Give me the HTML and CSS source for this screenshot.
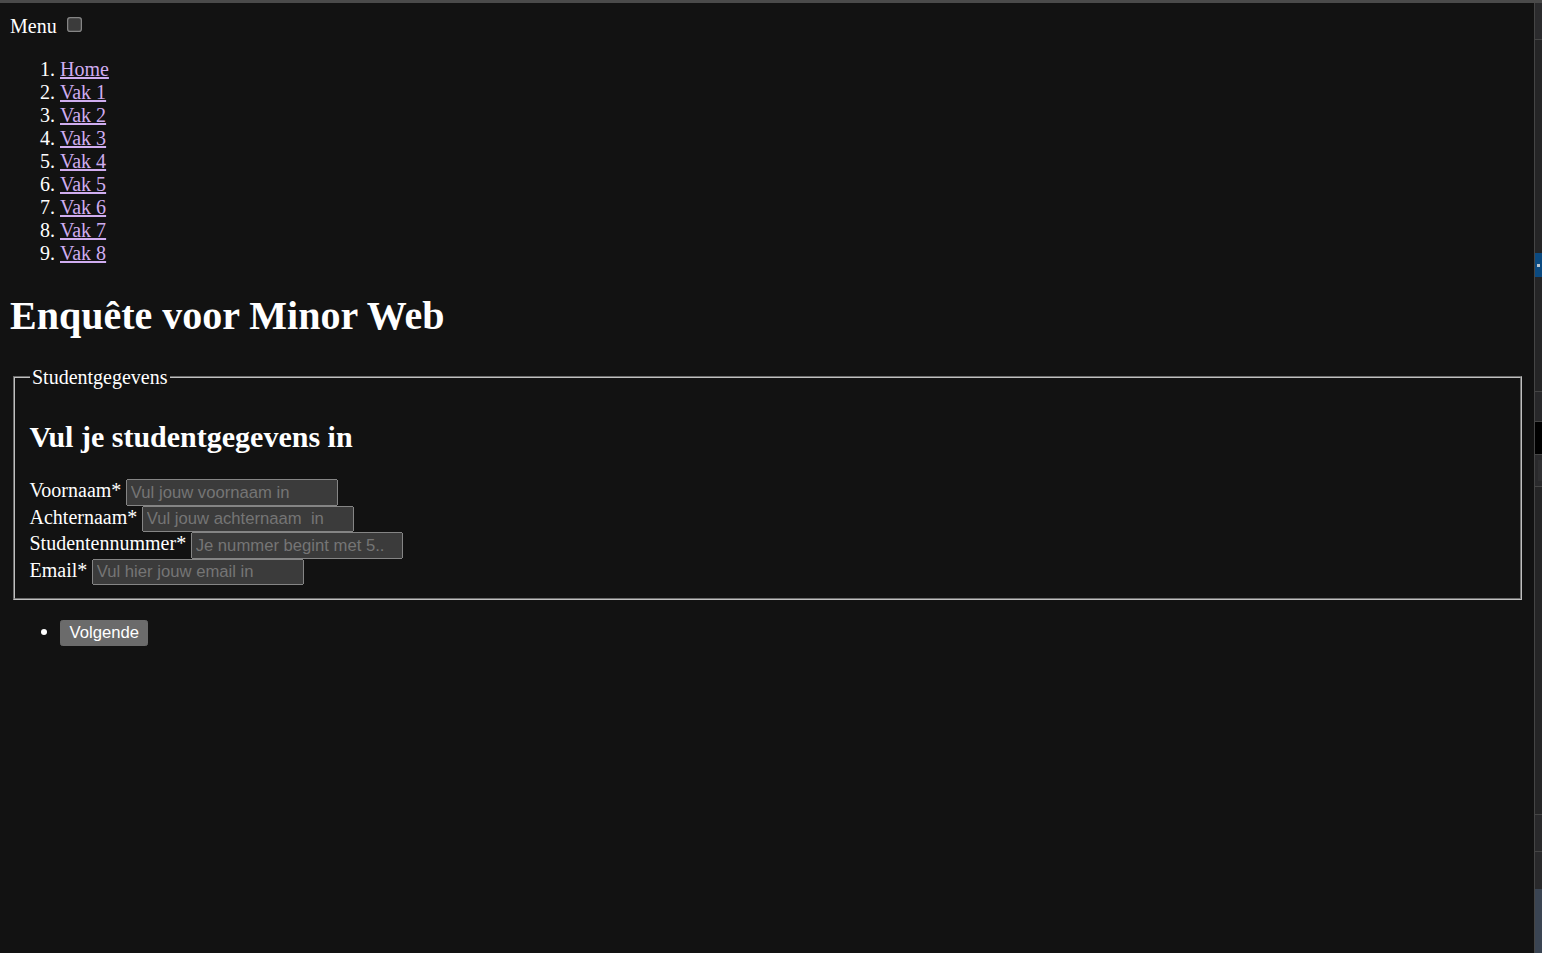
FILE: index.html
```html
<!DOCTYPE html>
<html lang="nl">
<head>
<meta charset="utf-8">
<title>Enquête voor Minor Web</title>
<link rel="stylesheet" href="styles.css">
</head>
<body class="frame">
<div class="topline"></div>
<div class="window">
  <main class="viewport">
    <div class="page">
      <nav class="menu">
        <label class="menu-label" for="menu-toggle">Menu</label>
        <input id="menu-toggle" type="checkbox">
        <ol class="menu-list">
          <li><a href="#">Home</a></li>
          <li><a href="#">Vak 1</a></li>
          <li><a href="#">Vak 2</a></li>
          <li><a href="#">Vak 3</a></li>
          <li><a href="#">Vak 4</a></li>
          <li><a href="#">Vak 5</a></li>
          <li><a href="#">Vak 6</a></li>
          <li><a href="#">Vak 7</a></li>
          <li><a href="#">Vak 8</a></li>
        </ol>
      </nav>
      <h1 class="title">Enquête voor Minor Web</h1>
      <form class="survey">
        <fieldset class="group">
          <legend>Studentgegevens</legend>
          <h2 class="group-title">Vul je studentgegevens in</h2>
          <label for="voornaam">Voornaam*</label>
          <input class="field" id="voornaam" type="text" placeholder="Vul jouw voornaam in"><br>
          <label for="achternaam">Achternaam*</label>
          <input class="field" id="achternaam" type="text" placeholder="Vul jouw achternaam  in"><br>
          <label for="nummer">Studentennummer*</label>
          <input class="field" id="nummer" type="text" placeholder="Je nummer begint met 5.."><br>
          <label for="email">Email*</label>
          <input class="field" id="email" type="email" placeholder="Vul hier jouw email in">
        </fieldset>
        <ul class="actions">
          <li><button type="button">Volgende</button></li>
        </ul>
      </form>
    </div>
  </main>
  <aside class="sidebar">
    <div class="seg seg-top"></div>
    <div class="seg seg-a"></div>
    <div class="seg seg-blue"><span class="dot"></span></div>
    <div class="seg seg-b"></div>
    <div class="seg seg-c"></div>
    <div class="seg seg-black"></div>
    <div class="seg seg-d"><span class="inner"></span></div>
    <div class="seg seg-e"></div>
    <div class="seg seg-f"></div>
    <div class="seg seg-g"></div>
    <div class="seg seg-slate"></div>
  </aside>
</div>
</body>
</html>
```
FILE: styles.css
```css
html {
  color-scheme: dark;
  height: 100%;
}
.frame {
  margin: 0;
  height: 100%;
  display: flex;
  flex-direction: column;
  background: #121212;
  overflow: hidden;
}
.topline {
  height: 3px;
  flex: none;
  background: #4a4a4a;
}
.window {
  flex: 1;
  display: flex;
  min-height: 0;
}
.viewport {
  flex: 1;
  background: #121212;
  color: #ffffff;
  font-family: "Liberation Serif", "Times New Roman", serif;
  overflow: hidden;
}
.page {
  zoom: 1.25;
  margin: 8px;
}
.menu-list a {
  color: #d0adf0;
}
.group {
  border: 2px groove #c0c0c0;
}
.field {
  width: 162.4px;
  font-family: "Liberation Sans", Arial, sans-serif;
}
.sidebar {
  width: 7px;
  flex: none;
  border-left: 1px solid #454545;
  background: #252526;
  display: flex;
  flex-direction: column;
}
.seg { flex: none; }
.seg-top { height: 36px; background: #2b2b2d; border-bottom: 1px solid #454545; }
.seg-a { height: 213px; }
.seg-blue {
  height: 24px;
  background: #0b4a80;
  display: flex;
  align-items: center;
  justify-content: center;
}
.dot { width: 3px; height: 3px; background: #b9c4cf; }
.seg-b { height: 114px; }
.seg-c { height: 29px; background: #28282a; border-top: 1px solid #454545; border-bottom: 1px solid #454545; }
.seg-black { height: 32px; background: #000000; }
.seg-d {
  height: 33px;
  background: #2a2a2c;
  border-top: 1px solid #454545;
  border-bottom: 1px solid #454545;
  padding: 5px 0 5px 3px;
  box-sizing: border-box;
}
.seg-d .inner { display: block; height: 100%; background: #303032; }
.seg-e { height: 327px; }
.seg-f { height: 36px; background: #29292b; border-top: 1px solid #454545; }
.seg-g { height: 37px; background: #29292b; border-top: 1px solid #454545; }
.seg-slate { flex: 1; background: #3a4452; }
```
